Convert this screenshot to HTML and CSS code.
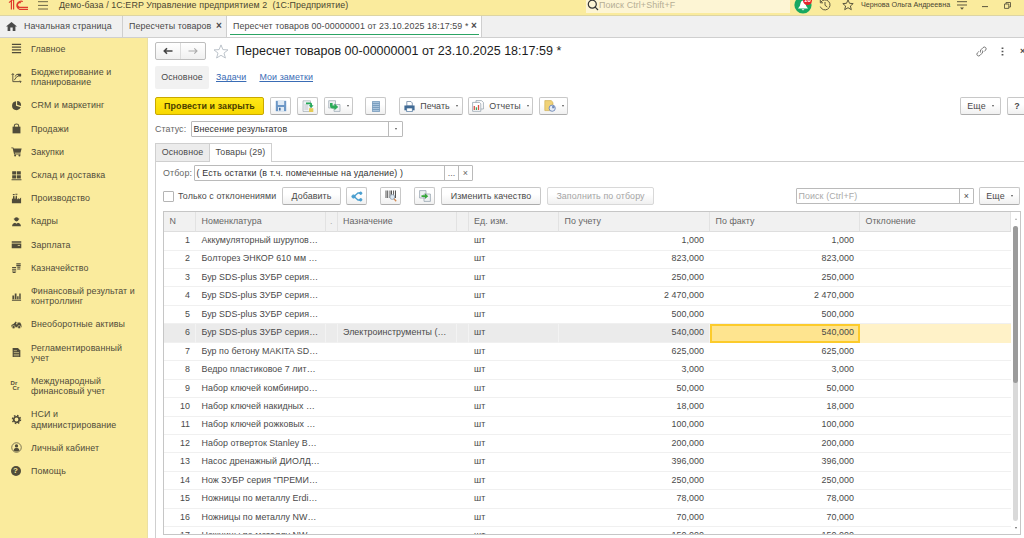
FILE: index.html
```html
<!DOCTYPE html>
<html lang="ru">
<head>
  <meta charset="UTF-8" />
  <title>Пересчет товаров</title>
  <link rel="stylesheet" href="styles.css">
</head>
<body>

  <header class="topbar">
    <svg class="logo" width="22" height="12" viewBox="0 0 22 12" fill="none" stroke="#e03a2c" stroke-width="1.2"><path d="M1 2.6L3.4.6V9.6M3.2 0H5.6V9.6M14.8 1.5A4.2 4.2 0 1 0 11.5 9.3H20M13 2.8A2.4 2.4 0 1 0 11.5 7.3H20"/></svg>
    <svg class="burger" width="10" height="9" viewBox="0 0 10 9" stroke="#6b6547"><path d="M0 .7H10M0 4.4H10M0 8H10"/></svg>
    <span class="app-name">Демо-база / 1С:ERP Управление предприятием 2&nbsp; (1С:Предприятие)</span>
    <div class="global-search">
      <svg width="12" height="12" viewBox="0 0 12 12" fill="none" stroke="#333" stroke-width="1.2"><circle cx="5.3" cy="5.2" r="4"/><path d="M8.2 8.2L11 11"/></svg>
      <span>Поиск Ctrl+Shift+F</span>
    </div>
    <div class="bell">
      <svg width="18" height="18" viewBox="0 0 18 18"><circle cx="9" cy="9" r="8.6" fill="#17a861"/><path d="M4 12.5Q6.3 10.5 6.6 7Q7 4.5 9 4.5Q11 4.5 11.4 7Q11.7 10.5 14 12.5ZM7.5 13.2H10.5L9 14.6Z" fill="#fff"/></svg>
      <span class="badge">10</span>
    </div>
    <svg class="history" width="12" height="12" viewBox="0 0 12 12" fill="none" stroke="#5c573e"><path d="M1.8 3.2A5 5 0 1 1 1.3 7.6M1.3 1V3.8H4M6 3V6.3L8.3 8"/></svg>
    <svg class="fav" width="12" height="12" viewBox="0 0 12 12" fill="none" stroke="#5c573e"><path d="M6 .9L7.5 4.3L11.2 4.6L8.4 7L9.3 10.7L6 8.7L2.7 10.7L3.6 7L.8 4.6L4.5 4.3Z"/></svg>
    <span class="user">Чернова Ольга Андреевна</span>
    <svg class="service" width="10" height="9" viewBox="0 0 10 9" stroke="#5c573e"><path d="M0 .7H10M0 4H10"/><path d="M3 6.6H7L5 8.8Z" fill="#5c573e" stroke="none"/></svg>
    <svg class="minimize" width="6" height="8" viewBox="0 0 6 8" stroke="#5c573e"><path d="M0 6.6H6"/></svg>
    <svg class="restore" width="7" height="7" viewBox="0 0 7 7" fill="none" stroke="#5c573e" stroke-width=".9"><path d="M.5 2H4.8V6.4H.5ZM2 2V.5H6.5V5H4.8"/></svg>
  </header>

  <nav class="tabs">
    <a class="tab tab-home">
      <svg width="11" height="9" viewBox="0 0 11 9" fill="#4a4a4a"><path d="M5.5 0L11 4.6H9.4V9H6.7V5.6H4.3V9H1.6V4.6H0Z"/></svg>
      Начальная страница
    </a>
    <a class="tab tab-list">Пересчеты товаров <b>×</b></a>
    <a class="tab tab-doc active">Пересчет товаров 00-00000001 от 23.10.2025 18:17:59 * <b>×</b></a>
  </nav>

  <div class="layout">

    <aside class="sidebar">
      <a><svg viewBox="0 0 12 12" stroke="#504c3a" stroke-width="1.3"><path d="M1 1.5H11M1 4.5H11M1 7.5H11M1 10.5H11"/></svg>Главное</a>
      <a><svg viewBox="0 0 12 12" fill="none" stroke="#504c3a" stroke-width="1"><path d="M2 2V10.5H11M.7 3.2L2 1.7L3.3 3.2M9.8 9.3L11 10.5L9.8 11.7M3.5 9Q5.5 4.5 10 3.3M4.5 5L6 2.7H10.5V4"/><path d="M7 2H11V5H8.5Z" fill="#504c3a" stroke="none"/></svg>Бюджетирование и<br>планирование</a>
      <a><svg viewBox="0 0 12 12" fill="#504c3a"><path d="M5.5 1.3A4.9 4.9 0 1 0 10.6 8L5.5 6.4Z"/><path d="M6.7 1A4.6 4.6 0 0 1 11 5.6L10.9 6.6L6.7 5.3Z"/></svg>CRM и маркетинг</a>
      <a><svg viewBox="0 0 12 12" fill="#504c3a"><path d="M1.7 4H10.3V11.3H1.7Z"/><path d="M3.6 5.5V3Q3.7 1 6 1Q8.3 1 8.4 3V5.5" fill="none" stroke="#504c3a" stroke-width="1.1"/></svg>Продажи</a>
      <a><svg viewBox="0 0 12 12" fill="#504c3a"><path d="M.3 1.5H2.5L3 2.8H11.6L10.4 7.3H4L4.3 8.2H10.5V9.2H3.4L1.8 2.5H.3Z"/><circle cx="4.5" cy="10.4" r="1.1"/><circle cx="9.2" cy="10.4" r="1.1"/></svg>Закупки</a>
      <a><svg viewBox="0 0 12 12" fill="#504c3a"><path d="M1.3 1.4H5.6V5H1.3ZM6.4 1.4H10.7V5H6.4ZM1.3 5.8H5.6V9.2H1.3ZM6.4 5.8H10.7V9.2H6.4ZM.6 10H11.4V11.2H.6Z"/></svg>Склад и доставка</a>
      <a><svg viewBox="0 0 12 12" fill="#504c3a"><path d="M1 11.2V6.2H2L2.4 3H3.7L4 6.2H4.8L5.2 3H6.4L6.8 7L8.6 5.4V7L11 5V11.2ZM2 1.2H4V2.3H2ZM4.8 .8H7V2H4.8Z"/></svg>Производство</a>
      <a><svg viewBox="0 0 12 12" fill="#504c3a"><circle cx="6" cy="3.6" r="2.3"/><path d="M1.2 11.2Q1.2 8 4.4 7.4L6 8.5L7.6 7.4Q10.8 8 10.8 11.2Z"/><path d="M3 2.8H9V3.6H3Z"/></svg>Кадры</a>
      <a><svg viewBox="0 0 12 12" fill="#504c3a"><path d="M.8 2.5H11.2V4.2H.8ZM.8 5H11.2V10H.8Z"/><path d="M7.3 6.5H9.8V7.3H7.3Z" fill="#faeb9d"/></svg>Зарплата</a>
      <a><svg viewBox="0 0 12 12" fill="none" stroke="#504c3a" stroke-width="1.2"><path d="M5.8 2H10.6M5.8 3.9H10.6M6.8 5.8H10.2M6.8 7.7H10.2M1.2 6H5.6M1.2 7.9H5.6M1.2 9.8H5.6M1.8 11.4H5"/></svg>Казначейство</a>
      <a><svg viewBox="0 0 12 12" fill="#504c3a"><path d="M1.5 4.8H3.4V9H1.5ZM4.1 2.6H6V9H4.1ZM6.7 5.6H8.3V9H6.7ZM9 2.8H10.6V9H9ZM1 9.6H11V10.6H1Z"/></svg>Финансовый результат и<br>контроллинг</a>
      <a><svg viewBox="0 0 12 12" fill="#504c3a"><path d="M.4 6.5L3 5.2L5.2 2.8L6.2 3.5L5.4 5.6H7V3.8H10L11.2 6L11.6 9H.6Z"/><circle cx="2.8" cy="8.8" r="1.7" stroke="#faeb9d" stroke-width=".6"/><circle cx="8.9" cy="8.8" r="1.7" stroke="#faeb9d" stroke-width=".6"/></svg>Внеоборотные активы</a>
      <a><svg viewBox="0 0 12 12" fill="#504c3a"><path d="M1.8 1.2H7.6L10.2 3.8V11H1.8Z"/><path d="M3 4H6.5M3 8H8.8M3 9.6H8.8M3 6H8.8" stroke="#faeb9d" stroke-width=".6"/></svg>Регламентированный<br>учет</a>
      <a><span class="drcr">Dr<i>Cr</i></span>Международный<br>финансовый учет</a>
      <a><svg viewBox="0 0 12 12" fill="none" stroke="#504c3a"><circle cx="6" cy="6" r="3" stroke-width="1.9"/><circle cx="6" cy="6" r="4.4" stroke-width="1.5" stroke-dasharray="1.73 1.73"/></svg>НСИ и<br>администрирование</a>
      <a><svg viewBox="0 0 12 12" fill="#504c3a"><circle cx="6" cy="6" r="5.2" fill="none" stroke="#504c3a" stroke-width=".8"/><circle cx="6" cy="4.3" r="1.8"/><path d="M2.8 9.2Q3 7 5 6.6H7Q9 7 9.2 9.2Q6 11.4 2.8 9.2Z"/></svg>Личный кабинет</a>
      <a><span class="help">?</span>Помощь</a>
    </aside>

    <main class="form">

      <div class="form-header">
        <div class="nav-buttons">
          <span><svg width="10" height="8" viewBox="0 0 10 8" fill="none" stroke="#444" stroke-width="1.6"><path d="M9.5 4H1.5M4 1.3L1.3 4L4 6.7"/></svg></span>
          <span><svg width="10" height="8" viewBox="0 0 10 8" fill="none" stroke="#aaa" stroke-width="1.1"><path d="M.5 4H9M6.3 1.3L9 4L6.3 6.7"/></svg></span>
        </div>
        <svg class="star" width="16" height="15" viewBox="0 0 16 15" fill="none" stroke="#b4bcc4" stroke-width=".9"><path d="M8 .9L9.9 5.6L15 5.9L11 9.1L12.4 14L8 11.3L3.6 14L5 9.1L1 5.9L6.1 5.6Z"/></svg>
        <h1>Пересчет товаров 00-00000001 от 23.10.2025 18:17:59 *</h1>
        <div class="header-tools">
          <svg width="11" height="11" viewBox="0 0 11 11" fill="none" stroke="#777" stroke-width="1"><path d="M4.6 6.5Q3.6 5 5 3.7L7 1.6Q8.3.4 9.6 1.5Q10.8 2.8 9.6 4.1L8.2 5.5M6.4 4.5Q7.4 6 6 7.3L4 9.4Q2.7 10.6 1.4 9.5Q.2 8.2 1.4 6.9L2.8 5.5"/></svg>
          <svg class="dots" width="3" height="9" viewBox="0 0 3 9" fill="#555"><path d="M.6 .5H2.4V2.1H.6ZM.6 3.7H2.4V5.3H.6ZM.6 6.9H2.4V8.5H.6Z"/></svg>
          <b>×</b>
        </div>
      </div>

      <div class="form-nav">
        <span class="current">Основное</span>
        <a>Задачи</a>
        <a>Мои заметки</a>
      </div>

      <div class="toolbar">
        <button class="btn primary">Провести и закрыть</button>
        <button class="btn icon"><svg width="12" height="12" viewBox="0 0 12 12"><path d="M.8 .8H11.2V11.2H.8Z" fill="#6c97c6"/><path d="M2.8 .8H9.2V5H2.8ZM3 7H9V11.2H3Z" fill="#dfeaf5"/><path d="M4 7.8H5.6V10.6H4Z" fill="#42699a"/></svg></button>
        <button class="btn icon"><svg width="12" height="13" viewBox="0 0 12 13"><path d="M1 .8H8.5V11.5H1Z" fill="#eef1f3" stroke="#a4adb5" stroke-width=".7"/><path d="M2.3 5H6M2.3 7H6M2.3 9H6" stroke="#aab" stroke-width=".6"/><path d="M4 2.5H8.5Q10 2.5 10 4V5.3H11.6L9.2 8L6.8 5.3H8.3V4.2H4Z" fill="#25a95a"/><path d="M7 8.2H11.3V12H7Z" fill="#e5cb55"/></svg></button>
        <button class="btn icon drop"><svg width="13" height="12" viewBox="0 0 13 12"><path d="M.7 .7H7.5V8H.7ZM6 4.5H12V11.4H6Z" fill="#eef1f3" stroke="#98a5b0" stroke-width=".7"/><path d="M2 3H4.6V5.5H6.5V3.6L10.2 7L6.5 10.2V8.4H4Q2 8.2 2 6Z" fill="#2cab59"/></svg><i></i></button>
        <button class="btn icon list"><svg width="8" height="11" viewBox="0 0 8 11"><path d="M.4 .4H7.6V10.6H.4Z" fill="#a9c4dc" stroke="#6f94b7" stroke-width=".8"/><path d="M.5 2.5H7.5M.5 4.5H7.5M.5 6.5H7.5M.5 8.5H7.5" stroke="#6f94b7" stroke-width=".8"/></svg></button>
        <button class="btn print"><svg width="11" height="11" viewBox="0 0 11 11"><path d="M2.8 .5H7L8.3 2V5H2.8Z" fill="#fff" stroke="#6e88a5" stroke-width=".8"/><path d="M.4 4.5H10.6V9.3H.4Z" fill="#416b96"/><path d="M2.6 7H8.4V10.6H2.6Z" fill="#fff" stroke="#416b96" stroke-width=".7"/></svg>Печать<i></i></button>
        <button class="btn reports"><svg width="12" height="12" viewBox="0 0 12 12" fill="#fff" stroke="#8a98a3" stroke-width=".7"><path d="M4 .6H9.5L11.4 2.5V9H4Z"/><path d="M.6 2.4H7.5L8.8 3.8V11.3H.6Z"/><path d="M2.3 10V6" stroke="#d85445" stroke-width="1.3"/><path d="M4.4 10V7.3" stroke="#3ca45c" stroke-width="1.3"/><path d="M6.5 10V5" stroke="#d85445" stroke-width="1.3"/></svg>Отчеты<i></i></button>
        <button class="btn icon sched"><svg width="12" height="12" viewBox="0 0 12 12"><path d="M.8 .6H7.2L9 2.4V10.6H.8Z" fill="#f0d277" stroke="#c9a747" stroke-width=".6"/><circle cx="8.2" cy="8.2" r="3.1" fill="#e6edf7" stroke="#6c87b8" stroke-width=".9"/><path d="M8.2 8.2V5.8A2.4 2.4 0 0 1 10.6 8.2Z" fill="#6c87b8"/></svg><i></i></button>
        <button class="btn more">Еще<i></i></button>
        <button class="btn question">?</button>
      </div>

      <div class="status">
        <label>Статус:</label>
        <div class="field"><span>Внесение результатов</span><u><i></i></u></div>
      </div>

      <div class="page-tabs">
        <span>Основное</span>
        <span class="selected">Товары (29)</span>
      </div>

      <section class="page">

        <div class="filter">
          <label>Отбор:</label>
          <div class="field"><span>( Есть остатки (в т.ч. помеченные на удаление) )</span><u>...</u><u>×</u></div>
        </div>

        <div class="commands">
          <span class="checkbox"></span>
          <label>Только с отклонениями</label>
          <button class="btn add">Добавить</button>
          <button class="btn icon share"><svg width="12" height="11" viewBox="0 0 12 11" fill="#4a9fd0" stroke="#4a9fd0"><path d="M10 2H7L3 5.5L7 9H10" fill="none" stroke-width="1.3"/><circle cx="2.5" cy="5.5" r="1.6"/><circle cx="9.7" cy="2.2" r="1.2"/><circle cx="9.7" cy="8.8" r="1.2"/></svg></button>
          <button class="btn icon scan"><svg width="12" height="12" viewBox="0 0 12 12"><path d="M1 .5V8M2.7 .5V8M5 .5V8M6.5 .5V8M8.6 .5V6M10.5 .5V8" stroke="#555" stroke-width="1"/><circle cx="7.3" cy="7" r="2.4" fill="#dbe8f3" stroke="#8a99a8" stroke-width=".8"/><path d="M9 8.8L11.2 11.3" stroke="#d28a55" stroke-width="1.3"/></svg></button>
          <button class="btn icon move"><svg width="12" height="12" viewBox="0 0 12 12"><path d="M.6 .6H7V8H.6ZM5 4H11.4V11.4H5Z" fill="#eef1f3" stroke="#8d9ba8" stroke-width=".7"/><path d="M2.5 5.3H6V3.6L9.3 6.2L6 8.8V7H2.5Z" fill="#35a838"/></svg></button>
          <button class="btn quality">Изменить качество</button>
          <button class="btn fill" disabled>Заполнить по отбору</button>
          <div class="field search"><span>Поиск (Ctrl+F)</span><u>×</u></div>
          <button class="btn more">Еще<i></i></button>
        </div>

        <div class="grid">
          <div class="rows">
            <div class="row head"><span>N</span><span>Номенклатура</span><span class="dot">.</span><span>Назначение</span><span></span><span>Ед. изм.</span><span>По учету</span><span>По факту</span><span>Отклонение</span></div>
            <div class="row"><span>1</span><span>Аккумуляторный шурупов…</span><span></span><span></span><span></span><span>шт</span><span>1,000</span><span>1,000</span><span></span></div>
            <div class="row"><span>2</span><span>Болторез ЭНКОР 610 мм …</span><span></span><span></span><span></span><span>шт</span><span>823,000</span><span>823,000</span><span></span></div>
            <div class="row"><span>3</span><span>Бур SDS-plus ЗУБР серия…</span><span></span><span></span><span></span><span>шт</span><span>250,000</span><span>250,000</span><span></span></div>
            <div class="row"><span>4</span><span>Бур SDS-plus ЗУБР серия…</span><span></span><span></span><span></span><span>шт</span><span>2 470,000</span><span>2 470,000</span><span></span></div>
            <div class="row"><span>5</span><span>Бур SDS-plus ЗУБР серия…</span><span></span><span></span><span></span><span>шт</span><span>500,000</span><span>500,000</span><span></span></div>
            <div class="row current-row"><span>6</span><span>Бур SDS-plus ЗУБР серия…</span><span></span><span>Электроинструменты (…</span><span></span><span>шт</span><span>540,000</span><span class="active-cell">540,000</span><span class="tail"></span></div>
            <div class="row"><span>7</span><span>Бур по бетону MAKITA SD…</span><span></span><span></span><span></span><span>шт</span><span>625,000</span><span>625,000</span><span></span></div>
            <div class="row"><span>8</span><span>Ведро пластиковое 7 лит…</span><span></span><span></span><span></span><span>шт</span><span>3,000</span><span>3,000</span><span></span></div>
            <div class="row"><span>9</span><span>Набор ключей комбиниро…</span><span></span><span></span><span></span><span>шт</span><span>50,000</span><span>50,000</span><span></span></div>
            <div class="row"><span>10</span><span>Набор ключей накидных …</span><span></span><span></span><span></span><span>шт</span><span>18,000</span><span>18,000</span><span></span></div>
            <div class="row"><span>11</span><span>Набор ключей рожковых …</span><span></span><span></span><span></span><span>шт</span><span>100,000</span><span>100,000</span><span></span></div>
            <div class="row"><span>12</span><span>Набор отверток Stanley B…</span><span></span><span></span><span></span><span>шт</span><span>200,000</span><span>200,000</span><span></span></div>
            <div class="row"><span>13</span><span>Насос дренажный ДИОЛД…</span><span></span><span></span><span></span><span>шт</span><span>396,000</span><span>396,000</span><span></span></div>
            <div class="row"><span>14</span><span>Нож ЗУБР серия "ПРЕМИ…</span><span></span><span></span><span></span><span>шт</span><span>250,000</span><span>250,000</span><span></span></div>
            <div class="row"><span>15</span><span>Ножницы по металлу Erdi…</span><span></span><span></span><span></span><span>шт</span><span>78,000</span><span>78,000</span><span></span></div>
            <div class="row"><span>16</span><span>Ножницы по металлу NW…</span><span></span><span></span><span></span><span>шт</span><span>70,000</span><span>70,000</span><span></span></div>
            <div class="row"><span>17</span><span>Ножницы по металлу NW…</span><span></span><span></span><span></span><span>шт</span><span>150,000</span><span>150,000</span><span></span></div>
          </div>
          <div class="scrollbar">
            <i class="up"></i>
            <div class="track"><div class="thumb"></div></div>
            <i class="down"></i>
          </div>
        </div>

      </section>
    </main>
  </div>

</body>
</html>
```

FILE: styles.css
```css
* {
  box-sizing: border-box;
}

body {
  margin: 0;
  width: 1024px;
  height: 538px;
  overflow: hidden;
  display: flex;
  flex-direction: column;
  font-family: "Liberation Sans", Arial, sans-serif;
  font-size: 8.9px;
  letter-spacing: 0.1px;
  line-height: 10.2px;
  color: #4a4a4a;
  background: white;
  white-space: nowrap;
}

svg {
  flex: none;
  display: block;
}

/* верхняя панель */
.topbar {
  flex: none;
  display: flex;
  align-items: flex-start;
  height: 16px;
  background: #faeb9d;
  border-bottom: 1px solid #ddd5a4;
}

.logo {
  margin-left: 8px;
}

.burger {
  margin: 1px 0 0 8px;
}

.app-name {
  width: 538px;
  padding-left: 11px;
  color: #4a4632;
}

.global-search {
  display: flex;
  width: 204px;
  height: 13px;
  background: #fdf5d4;
  color: #b5ae94;
}

.global-search svg {
  margin: -1px 0 0 1px;
}

.bell {
  position: relative;
  margin: -4px 0 0 4px;
}

.badge {
  position: absolute;
  left: 9px;
  top: 0;
  width: 9px;
  height: 9px;
  border-radius: 5px;
  background: #e8242c;
  color: white;
  font-size: 6px;
  font-weight: bold;
  line-height: 9px;
  text-align: center;
}

.history {
  margin: -1px 0 0 7px;
}

.fav {
  margin: -1px 0 0 11px;
}

.user {
  width: 96px;
  margin-left: 7px;
  font-size: 7.2px;
  letter-spacing: 0;
  color: #4a4632;
}

.service {
  margin-top: 1px;
}

.minimize {
  margin-left: 15px;
}

.restore {
  margin: 2px 0 0 16px;
}

/* открытые окна */
.tabs {
  flex: none;
  display: flex;
  height: 22px;
  background: #f0f0f0;
  border-bottom: 1px solid #cfcfcf;
}

.tab {
  display: flex;
  align-items: center;
  border-right: 1px solid #cfcfcf;
}

.tab b {
  margin-left: auto;
  font-size: 10px;
}

.tab-home {
  width: 123px;
  padding-left: 6px;
}

.tab-home svg {
  margin-right: 7px;
}

.tab-list {
  width: 104px;
  padding: 0 4px 0 6px;
}

.tab-doc {
  width: 255px;
  padding: 0 4px 0 6px;
}

.tab.active {
  background: linear-gradient(#2ba463, #2ba463) 3px 18px / 249px 1px no-repeat white;
}

.layout {
  display: flex;
  flex: 1;
  min-height: 0;
}

/* разделы */
.sidebar {
  flex: none;
  width: 148px;
  background: #faeb9d;
  border-right: 1px solid #ebe0a3;
}

.sidebar a {
  display: flex;
  align-items: center;
  padding: 6.5px 0 6.5px 10.5px;
  color: #504c3a;
}

.sidebar a:first-child {
  padding-top: 5.7px;
}

.sidebar svg {
  width: 11px;
  height: 11px;
  margin: -1px 9.5px -1px 0;
}

.drcr {
  width: 20.5px;
  font-size: 6px;
  font-weight: bold;
  line-height: 5px;
}

.drcr i {
  display: block;
  padding-left: 2px;
  font-style: normal;
}

.help {
  width: 10px;
  height: 10px;
  margin-right: 10.5px;
  border-radius: 5px;
  background: #504c3a;
  color: #faeb9d;
  font-size: 8px;
  font-weight: bold;
  line-height: 10px;
  text-align: center;
}

/* форма документа */
.form {
  flex: none;
  display: flex;
  flex-direction: column;
  width: 900px;
  padding: 4px 0 0 7px;
}

.form-header {
  display: flex;
  align-items: center;
  height: 18px;
}

.nav-buttons {
  display: flex;
  width: 51px;
  height: 18px;
  border: 1px solid #bdbdbd;
  border-radius: 2px;
  background: linear-gradient(white, #f0f0f0);
}

.nav-buttons span {
  flex: 1;
  display: flex;
  align-items: center;
  justify-content: center;
}

.nav-buttons span + span {
  border-left: 1px solid #dcdcdc;
}

.star {
  margin: 0 7px;
}

h1 {
  width: 740px;
  margin: 0;
  font-size: 12.5px;
  font-weight: normal;
  letter-spacing: 0.02px;
  line-height: 16px;
  color: #1c1c1c;
}

.header-tools {
  display: flex;
  align-items: center;
}

.header-tools .dots {
  margin: 0 16px 0 14px;
}

.header-tools b {
  font-size: 9px;
}

.form-nav {
  display: flex;
  align-items: center;
  gap: 13px;
  height: 23px;
  margin-top: 6px;
}

.form-nav .current {
  width: 54px;
  padding: 6.5px 0;
  border-radius: 2px;
  background: #f1f1f1;
  text-align: center;
}

.form-nav .current + a {
  margin-left: -6px;
}

.form-nav a {
  color: #3a6cb5;
  text-decoration: underline;
}

.toolbar,
.commands {
  display: flex;
  align-items: center;
  height: 18px;
}

.toolbar {
  margin-top: 8px;
}

.btn {
  flex: none;
  display: flex;
  align-items: center;
  justify-content: center;
  height: 18px;
  padding: 0;
  border: 1px solid #c8c8c8;
  border-bottom-color: #adadad;
  border-radius: 2px;
  background: linear-gradient(white 40%, #f0f0f0);
  color: #4a4a4a;
  font: inherit;
  letter-spacing: inherit;
}

.btn.icon {
  width: 21px;
  margin-left: 6px;
}

.btn i,
.field i {
  margin-left: 6px;
  border: 1.8px solid transparent;
  border-top: 2px solid #555;
  border-bottom: 0;
}

.field i {
  margin: 0;
}

.btn.primary {
  width: 109px;
  border-color: #c9a800;
  background: linear-gradient(#ffe817, #f8d800);
  color: #4a4000;
  font-weight: bold;
}

.btn.icon.drop {
  width: 29px;
}

.btn.icon.list {
  margin-left: 12px;
}

.btn.print {
  width: 64px;
  margin-left: 13px;
}

.btn.reports {
  width: 65px;
  margin-left: 5px;
}

.btn.print svg,
.btn.reports svg {
  margin-right: 5px;
}

.btn.icon.sched {
  width: 29px;
}

.btn.more {
  width: 41px;
}

.toolbar .more {
  margin-left: 392px;
}

.btn.question {
  width: 22px;
  margin-left: 6px;
  padding-right: 2px;
  font-weight: bold;
}

.field {
  display: flex;
  height: 16px;
  border: 1px solid #bababa;
  border-radius: 1px;
  line-height: 14px;
  background: white;
}

.field span {
  flex: 1;
  padding-left: 1.5px;
  color: #333;
}

.field u {
  display: flex;
  align-items: center;
  justify-content: center;
  width: 14px;
  border-left: 1px solid #bababa;
  text-decoration: none;
}

.status {
  display: flex;
  align-items: center;
  margin-top: 6px;
  color: #666;
}

.status label {
  width: 36px;
}

.status .field {
  width: 212px;
}

/* страницы формы */
.page-tabs {
  display: flex;
  height: 18px;
  margin-top: 6px;
}

.page-tabs span {
  width: 55px;
  border: 1px solid #cfcfcf;
  border-bottom: 0;
  background: #ececec;
  line-height: 16px;
  text-align: center;
}

.page-tabs .selected {
  width: 63px;
  margin: 0 0 -1px -1px;
  background: white;
  z-index: 1;
}

.page {
  flex: 1;
  padding: 3px 0 0 7px;
  border: 1px solid #cfcfcf;
  border-width: 1px 0 0 1px;
}

.filter {
  display: flex;
  align-items: center;
  color: #666;
}

.filter label {
  width: 31px;
}

.filter .field {
  width: 279px;
}

.filter .field span {
  letter-spacing: 0.16px;
}

.commands {
  margin-top: 6px;
}

.checkbox {
  width: 11px;
  height: 11px;
  border: 1px solid #b5b5b5;
  border-radius: 1px;
}

.commands label {
  width: 108px;
  padding-left: 4px;
}

.btn.add {
  width: 59px;
}

.btn.icon.share {
  margin-left: 5px;
}

.btn.icon.scan,
.btn.icon.move {
  margin-left: 13px;
}

.btn.quality {
  width: 100px;
  margin-left: 6px;
}

.btn.fill {
  width: 107px;
  margin-left: 6px;
  border-color: #d8d8d8;
  color: #a5a5a5;
}

.field.search {
  width: 178px;
  margin: 0 5px 0 142px;
}

.search span {
  color: #aaa;
}

.grid {
  display: flex;
  width: 858px;
  height: 324px;
  margin-top: 6px;
  border: 1px solid #c6c6c6;
  overflow: hidden;
}

.rows {
  width: 847px;
}

.row {
  display: grid;
  grid-template-columns: 32px 130px 11.5px 119.5px 11.5px 90.5px 151px 150px 151px;
  height: 18.45px;
  letter-spacing: 0.05px;
}

.row span {
  padding: 0 5.5px;
  border-bottom: 1px solid #f0f0f0;
  line-height: 17.6px;
}

.row span:nth-child(1),
.row span:nth-child(7),
.row span:nth-child(8) {
  padding-right: 6px;
  text-align: right;
}

.row.head {
  height: 20px;
  background: #f1f1f1;
}

.row.head span {
  border-right: 1px solid #e2e2e2;
  border-bottom-color: #dedede;
  line-height: 19px;
  text-align: left;
  color: #666;
}

.row.head .dot {
  padding-left: 4px;
  color: #aaa;
}

.row.current-row {
  background: #ebebeb;
}

.row.current-row span {
  border-right: 1px solid #f3f3f3;
}

.row.current-row span:nth-child(1),
.row.current-row span:nth-child(7) {
  padding-right: 5px;
}

.row.current-row .active-cell {
  padding-right: 4px;
  border: 2px solid #fccb2b;
  background: #fee48f;
  line-height: 13.8px;
}

.row.current-row .tail {
  border: 0;
  background: #fff2c8;
}

.scrollbar {
  display: flex;
  flex-direction: column;
  align-items: center;
  width: 9px;
  padding: 6px 0 5px;
}

.track {
  flex: 1;
  width: 5px;
  margin: 6px 0;
  border-radius: 3px;
  background: #d9d9d9;
}

.thumb {
  height: 157px;
  border-radius: 3px;
  background: #9b9b9b;
}

.up,
.down {
  border: 1.5px solid transparent;
}

.up {
  border-top: 0;
  border-bottom: 2.5px solid #aaa;
}

.down {
  border-bottom: 0;
  border-top: 2.5px solid #666;
}
```
